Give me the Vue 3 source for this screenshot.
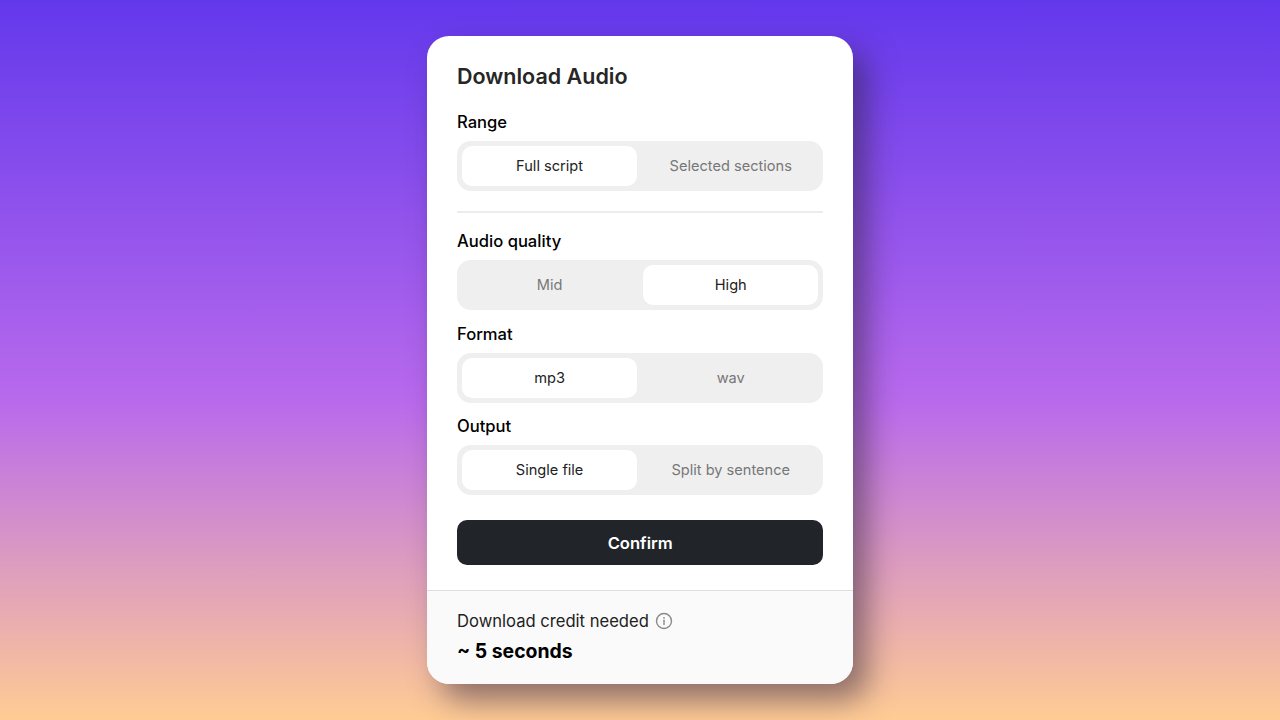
<script setup>
import { ref } from 'vue'

const groups = ref([
  { label: 'Range', options: ['Full script', 'Selected sections'], selected: 0, divider: true },
  { label: 'Audio quality', options: ['Mid', 'High'], selected: 1 },
  { label: 'Format', options: ['mp3', 'wav'], selected: 0 },
  { label: 'Output', options: ['Single file', 'Split by sentence'], selected: 0 },
])
</script>

<template>
  <main class="page">
    <section class="dialog">
      <div class="body">
        <h1>Download Audio</h1>

        <template v-for="group in groups" :key="group.label">
          <div class="field">
            <p class="label">{{ group.label }}</p>
            <div class="segment">
              <button
                v-for="(option, index) in group.options"
                :key="option"
                type="button"
                :class="{ active: group.selected === index }"
                @click="group.selected = index"
              >
                {{ option }}
              </button>
            </div>
          </div>
          <hr v-if="group.divider" />
        </template>

        <button type="button" class="confirm">Confirm</button>
      </div>

      <footer class="credit">
        <p>
          Download credit needed
          <svg width="18" height="18" viewBox="0 0 18 18" fill="none" aria-hidden="true">
            <circle cx="9" cy="9" r="7.5" stroke="#8a8a8a" stroke-width="1.4" />
            <path d="M9 8.2v4.3" stroke="#8a8a8a" stroke-width="1.4" stroke-linecap="round" />
            <circle cx="9" cy="5.8" r="0.9" fill="#8a8a8a" />
          </svg>
        </p>
        <strong>~ 5 seconds</strong>
      </footer>
    </section>
  </main>
</template>

<style>
body {
  margin: 0;
}
</style>

<style scoped>
.page {
  display: flex;
  justify-content: center;
  box-sizing: border-box;
  height: 720px;
  padding-top: 36px;
  overflow: hidden;
  background: linear-gradient(180deg, #6338ec 0%, #b96aec 56%, #ffcc94 100%);
  font-family: Inter, "Liberation Sans", sans-serif;
}

.dialog {
  width: 426px;
  height: 648px;
  display: flex;
  flex-direction: column;
  border-radius: 22px;
  background: #fff;
  overflow: hidden;
  box-shadow: 14px 16px 30px rgba(40, 30, 50, 0.5);
}

.body {
  flex: 1;
  padding: 27px 29.7px 0 30px;
}

h1 {
  margin: 0 0 20px;
  font-size: 21.5px;
  line-height: 27px;
  font-weight: 600;
  color: #262626;
}

.field {
  margin-bottom: 11.7px;
}

.label {
  margin: 0 0 7px;
  font-size: 16.6px;
  line-height: 24px;
  font-weight: 500;
  color: #000;
}

.segment {
  display: grid;
  grid-template-columns: 1fr 1fr;
  gap: 6px;
  height: 50px;
  box-sizing: border-box;
  padding: 5px;
  border-radius: 14px;
  background: #efefef;
}

.segment button {
  border: none;
  border-radius: 10px;
  background: transparent;
  color: #777;
  font: 400 14.6px Inter, "Liberation Sans", sans-serif;
  cursor: pointer;
}

.segment button.active {
  background: #fff;
  color: #222;
}

hr {
  height: 2px;
  margin: 20px 0 16px;
  border: none;
  background: #ececec;
}

.confirm {
  display: block;
  width: 100%;
  height: 45px;
  margin-top: 25px;
  border: none;
  border-radius: 10px;
  background: #212529;
  color: #fff;
  font: 600 16.6px Inter, "Liberation Sans", sans-serif;
  cursor: pointer;
}

.credit {
  height: 94px;
  box-sizing: border-box;
  padding: 18px 30px 0;
  border-top: 1px solid #dedede;
  background: #fafafa;
}

.credit p {
  display: flex;
  align-items: center;
  gap: 6px;
  margin: 0;
  font-size: 16.6px;
  line-height: 24px;
  color: #222;
}

.credit strong {
  display: block;
  margin-top: 4px;
  font-size: 19.4px;
  line-height: 28px;
  font-weight: 700;
  color: #000;
}
</style>
